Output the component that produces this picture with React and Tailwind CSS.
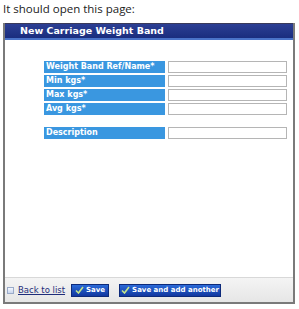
const fields = ['Weight Band Ref/Name*', 'Min kgs*', 'Max kgs*', 'Avg kgs*']

function Tick() {
  return (
    <svg width="9" height="8" viewBox="0 0 9 8" className="shrink-0">
      <path d="M1 4.5 L3.5 7 L8 1" fill="none" stroke="#c4e58a" strokeWidth="1.6" />
    </svg>
  )
}

function Row({ label }) {
  return (
    <div className="flex items-center gap-[3px] h-[12px]">
      <div className="w-[121px] h-[12px] bg-[#3a97e0] text-white text-[8px] font-bold leading-[12px] pl-[2px] whitespace-nowrap overflow-hidden">{label}</div>
      <div className="w-[119px] h-[12px] bg-white border border-[#b5b5b5]" />
    </div>
  )
}

export default function App() {
  return (
    <div className="w-[299px] h-[309px] bg-white relative" style={{ fontFamily: '"DejaVu Sans", Verdana, sans-serif' }}>
      <p className="text-[11.5px] leading-[14px] pl-[3px] pt-[2px] text-[#222]" style={{ fontFamily: '"Open Sans", "Liberation Sans", sans-serif' }}>It should open this page:</p>
      <div className="mt-[7px] ml-[3px] w-[292px] h-[281px] border-l-2 border-r-2 border-b-2 border-[#7a7a7a] flex flex-col">
        <div className="h-[17px] bg-gradient-to-b from-[#2c3f94] to-[#1a2d7e] border-t border-[#3a3a5a] border-b-[2px] border-b-[#4a73c8] flex items-center pl-[15px]">
          <span className="text-white text-[9.5px] font-bold">New Carriage Weight Band</span>
        </div>
        <div className="flex-1 flex flex-col pt-[21px] pl-[39px] gap-[2px]">
          {fields.map((f) => (
            <Row key={f} label={f} />
          ))}
          <div className="h-[8px]" />
          <Row label="Description" />
        </div>
        <div className="h-[25px] bg-gradient-to-b from-[#f4f4f4] to-[#e6e6e6] border-t border-[#d8d8d8] flex items-center pl-[2px]">
          <span className="w-[7px] h-[7px] border border-[#9aaac8] bg-gradient-to-b from-[#f4f8ff] to-[#c9d6ee] mr-[4px]" />
          <a className="text-[8.5px] text-[#1f2d7a] underline mr-[6px]">Back to list</a>
          <button className="h-[13px] w-[38px] bg-gradient-to-b from-[#2b6ad8] to-[#1237a0] border border-[#0d2a7a] text-white text-[7px] font-bold flex items-center justify-center gap-[2px] mr-[10px]">
            <Tick />Save
          </button>
          <button className="h-[13px] w-[102px] bg-gradient-to-b from-[#2b6ad8] to-[#1237a0] border border-[#0d2a7a] text-white text-[7px] font-bold flex items-center justify-center gap-[2px]">
            <Tick />Save and add another
          </button>
        </div>
      </div>
    </div>
  )
}
